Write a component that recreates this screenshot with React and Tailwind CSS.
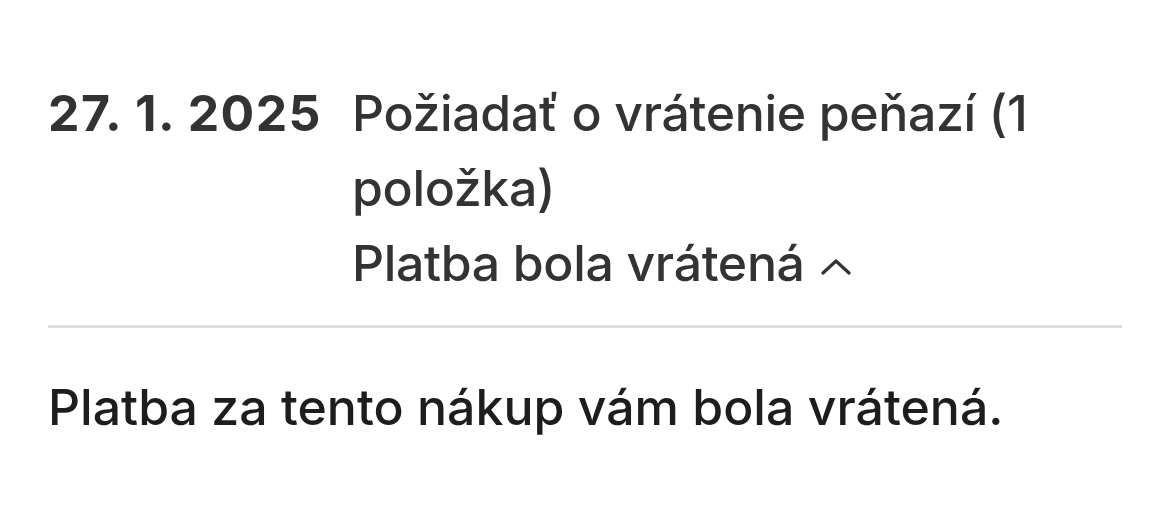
import React from 'react';

const Chevron = () => (
  <svg width="30" height="16" viewBox="0 0 30 16" fill="none" className="ml-4 mt-[6px]">
    <polyline points="2,14 15,2 28,14" stroke="#333333" strokeWidth="3.2" strokeLinecap="round" strokeLinejoin="round" />
  </svg>
);

export default function App() {
  return (
    <div className="w-[1170px] h-[512px] bg-white px-12 pt-[76px] font-['Inter',sans-serif]">
      <div className="flex text-[50px] leading-[75px] text-[#333333]">
        <div className="w-[304px] shrink-0 font-bold tracking-[1.4px] whitespace-nowrap">27. 1. 2025</div>
        <div className="flex-1 font-medium tracking-[-0.35px]">
          <div>Požiadať o vrátenie peňazí (1 položka)</div>
          <div className="flex items-center">
            <span>Platba bola vrátená</span>
            <Chevron />
          </div>
        </div>
      </div>
      <div className="mt-6 h-[3px] bg-[#dedede]" />
      <p className="mt-[42px] text-[50px] leading-[75px] font-medium text-[#1d1d1f]">
        Platba za tento nákup vám bola vrátená.
      </p>
    </div>
  );
}
